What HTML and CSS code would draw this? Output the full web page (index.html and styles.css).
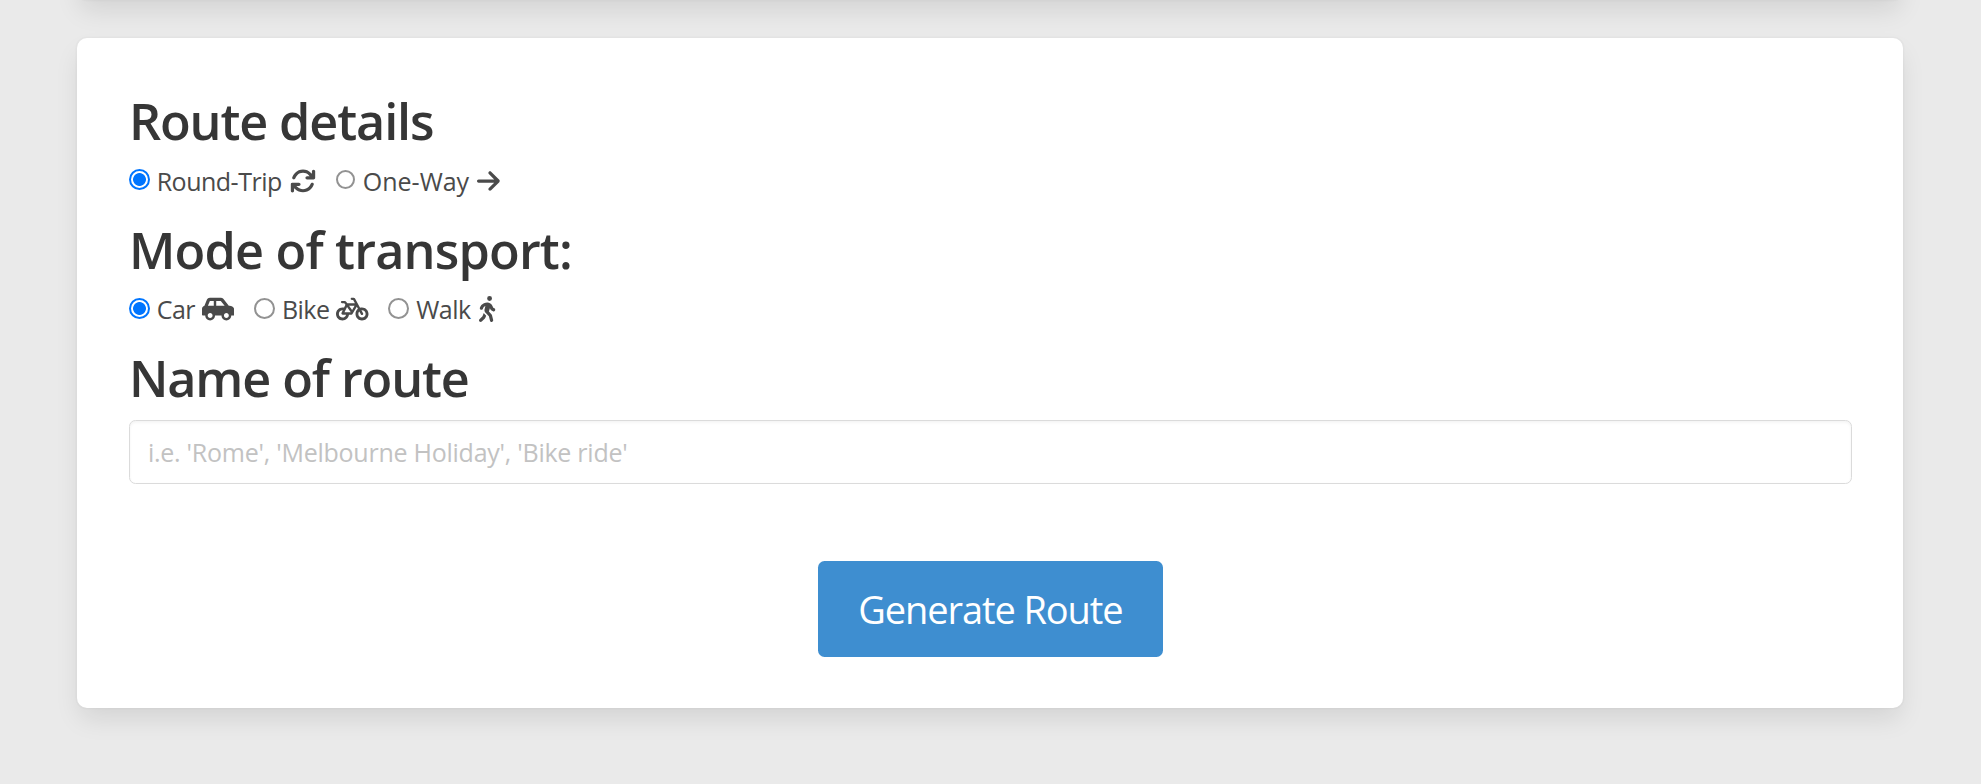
FILE: index.html
```
<!DOCTYPE html>
<html lang="en">
<head>
<meta charset="utf-8">
<title>Route planner</title>
<link rel="stylesheet" href="styles.css">
</head>
<body>
<div class="box box-previous"></div>
<form class="box">
  <h2 class="title title-details">Route details</h2>
  <div class="options">
    <label class="option"><input class="radio" type="radio" name="trip" checked><span class="text text-round">Round-Trip</span><svg class="icon" viewBox="0 0 512 512" width="26" height="26"><path d="M105.1 202.6c7.7-21.8 20.2-42.3 37.8-59.8c62.5-62.5 163.8-62.5 226.3 0L386.3 160H336c-17.7 0-32 14.3-32 32s14.3 32 32 32H463.5h.4c17.7 0 32-14.3 32-32V64c0-17.7-14.3-32-32-32s-32 14.3-32 32v51.2L414.4 97.6c-87.5-87.5-229.3-87.5-316.8 0C73.2 122 55.6 150.7 44.8 181.4c-5.9 16.7 2.9 34.9 19.5 40.8s34.9-2.9 40.8-19.5zM39 289.3c-5 1.5-9.8 4.2-13.7 8.2c-4 4-6.7 8.8-8.1 14c-.3 1.2-.6 2.5-.8 3.8c-.3 1.7-.4 3.4-.4 5.1V448c0 17.7 14.3 32 32 32s32-14.3 32-32V396.9l17.6 17.5c87.5 87.4 229.3 87.4 316.7 0c24.4-24.4 42.1-53.1 52.9-83.7c5.9-16.7-2.9-34.9-19.5-40.8s-34.9 2.9-40.8 19.5c-7.7 21.8-20.2 42.3-37.8 59.8c-62.5 62.5-163.8 62.5-226.3 0l-.1-.1L125.6 352H176c17.7 0 32-14.3 32-32s-14.3-32-32-32H48.4c-1.6 0-3.2 .1-4.8 .3s-3.1 .5-4.6 1z"/></svg></label>
    <label class="option"><input class="radio radio-small" type="radio" name="trip"><span class="text text-oneway">One-Way</span><svg class="icon" viewBox="0 0 448 512" width="22.75" height="26"><path d="M438.6 278.6c12.5-12.5 12.5-32.8 0-45.3l-160-160c-12.5-12.5-32.8-12.5-45.3 0s-12.5 32.8 0 45.3L338.8 224 32 224c-17.7 0-32 14.3-32 32s14.3 32 32 32l306.7 0L233.4 393.4c-12.5 12.5-12.5 32.8 0 45.3s32.8 12.5 45.3 0l160-160z"/></svg></label>
  </div>
  <h2 class="title title-mode">Mode of transport:</h2>
  <div class="options">
    <label class="option"><input class="radio" type="radio" name="mode" checked><span class="text text-car">Car</span><svg class="icon" viewBox="0 0 640 512" width="32.5" height="26"><path d="M544 192h-16L419.22 56.02A64.025 64.025 0 0 0 369.24 32H155.33c-26.17 0-49.7 15.93-59.42 40.23L48 194.26C20.44 201.4 0 226.21 0 256v112c0 8.84 7.16 16 16 16h48c0 53.02 42.98 96 96 96s96-42.98 96-96h128c0 53.02 42.98 96 96 96s96-42.98 96-96h48c8.84 0 16-7.16 16-16v-80c0-53.02-42.98-96-96-96zM160 432c-26.47 0-48-21.53-48-48s21.53-48 48-48 48 21.53 48 48-21.53 48-48 48zm72-240H116.93l38.4-96H232v96zm48 0V96h89.24l76.8 96H280zm200 240c-26.47 0-48-21.53-48-48s21.53-48 48-48 48 21.53 48 48-21.53 48-48 48z"/></svg></label>
    <label class="option"><input class="radio" type="radio" name="mode"><span class="text text-bike">Bike</span><svg class="icon" viewBox="0 0 640 512" width="32.5" height="26"><path d="M312 32c-13.3 0-24 10.7-24 24s10.7 24 24 24h25.7l34.6 64H222.9l-27.4-38C191 99.7 183.7 96 176 96H120c-13.3 0-24 10.7-24 24s10.7 24 24 24h43.7l22.1 30.7-26.6 53.1c-10-2.5-20.5-3.8-31.2-3.8C57.3 224 0 281.3 0 352s57.3 128 128 128c65.3 0 119.1-48.9 127-112h49c8.5 0 16.3-4.5 20.7-11.8l84.8-143.5 21.7 40.1C402.4 276.3 384 312 384 352c0 70.7 57.3 128 128 128s128-57.3 128-128s-57.3-128-128-128c-13.5 0-26.5 2.1-38.7 6L375.4 48.8C369.8 38.4 359 32 347.2 32H312zM458.6 303.7l32.3 59.7c6.3 11.7 20.9 16 32.5 9.7s16-20.9 9.7-32.5l-32.3-59.7c3.6-.6 7.4-.9 11.2-.9c39.8 0 72 32.2 72 72s-32.2 72-72 72s-72-32.2-72-72c0-18.6 7-35.5 18.6-48.3zM133.2 368h65c-7.3 32.1-36 56-70.2 56c-39.8 0-72-32.2-72-72s32.2-72 72-72c1.7 0 3.4 .1 5.1 .2l-24.2 48.5c-9 18.1 4.1 39.4 24.3 39.4zm33.7-48l50.7-101.3 72.9 101.2-.1 .1H166.8zm90.6-128H365.9L317 274.8 257.4 192z"/></svg></label>
    <label class="option"><input class="radio" type="radio" name="mode"><span class="text text-walk">Walk</span><svg class="icon" viewBox="0 0 320 512" width="16.25" height="26"><path d="M160 48a48 48 0 1 1 96 0 48 48 0 1 1 -96 0zM126.5 199.3c-1 .4-1.9 .8-2.9 1.2l-8 3.5c-16.4 7.3-29 21.2-34.7 38.2l-2.6 7.8c-5.6 16.8-23.7 25.8-40.5 20.2s-25.8-23.7-20.2-40.5l2.6-7.8c11.4-34.1 36.6-61.9 69.4-76.5l8-3.5c20.8-9.2 43.3-14 66.1-14c44.6 0 84.8 26.8 101.9 67.9L281 232.7l21.4 10.7c15.8 7.9 22.2 27.1 14.3 42.9s-27.1 22.2-42.9 14.3L247 287.3c-10.3-5.2-18.4-13.8-22.8-24.5l-9.6-23-19.3 65.5 49.5 54c5.4 5.9 9.2 13 11.2 20.8l23 92.1c4.3 17.1-6.1 34.5-23.3 38.8s-34.5-6.1-38.8-23.3l-22-88.1-70.7-77.1c-14.8-16.1-20.3-38.6-14.7-59.7l16.9-63.5zM68.7 398l25-62.4c2.1 3 4.5 5.8 7 8.6l40.7 44.4-14.5 36.2c-2.4 6-6 11.5-10.6 16.1L54.6 502.6c-12.5 12.5-32.8 12.5-45.3 0s-12.5-32.8 0-45.3L68.7 398z"/></svg></label>
  </div>
  <h2 class="title title-name">Name of route</h2>
  <input class="input" type="text" placeholder="i.e. 'Rome', 'Melbourne Holiday', 'Bike ride'">
  <button class="button" type="button">Generate Route</button>
</form>
</body>
</html>
```
FILE: styles.css
```
* {
  box-sizing: border-box;
}

body {
  margin: 0;
  height: 784px;
  overflow: hidden;
  background: #eaeaea;
  color: #4a4a4a;
  font-family: "Open Sans", "Noto Sans", sans-serif;
  font-size: 25px;
}

.box {
  display: flex;
  flex-direction: column;
  width: 1826px;
  height: 670px;
  margin: 38px 0 0 77.4px;
  padding: 54px 51.5px 0;
  border-radius: 10px;
  background: #fff;
  box-shadow: 0 13px 26px -3px rgba(10, 10, 10, 0.1), 0 0 0 1.6px rgba(10, 10, 10, 0.02);
}

.box-previous {
  height: 40px;
  margin-top: -40px;
  padding: 0;
}

.title {
  margin: 0;
  color: #363636;
  font-size: 50.4px;
  font-weight: 600;
  line-height: 58px;
  white-space: nowrap;
}

.title-details {
  letter-spacing: -1.13px;
}

.title-mode {
  letter-spacing: -0.82px;
}

.title-name {
  letter-spacing: -1.12px;
}

.options {
  display: flex;
  gap: 19.6px;
  height: 38.5px;
  margin: 11.5px 0 20.7px;
}

.option {
  display: flex;
  align-items: center;
  line-height: 38.5px;
}

.radio {
  width: 21px;
  height: 21px;
  margin: 0 6.8px 2px 0;
  border: 2px solid #929292;
  border-radius: 50%;
  background: #fff;
  appearance: none;
}

.radio:checked {
  border: 2px solid #0075ff;
  background: radial-gradient(circle, #0075ff 6px, #fff 6.8px);
}

.radio-small {
  width: 19px;
  height: 19px;
  margin-right: 8px;
}

.text {
  letter-spacing: -0.5px;
  white-space: nowrap;
}

.text-round {
  width: 133.5px;
}

.text-oneway {
  width: 114.3px;
  letter-spacing: 0;
}

.text-car {
  width: 45.3px;
}

.text-bike {
  width: 54.5px;
}

.text-walk {
  width: 63.2px;
}

.icon {
  fill: #4a4a4a;
}

.input {
  height: 64px;
  margin-top: 12.3px;
  padding: 0 18px;
  border: 1.5px solid #dbdbdb;
  border-radius: 6.5px;
  background: #fff;
  box-shadow: inset 0 1.6px 3px rgba(10, 10, 10, 0.05);
  font: inherit;
  letter-spacing: -0.25px;
}

.input::placeholder {
  color: #c2c2c2;
  opacity: 1;
}

.button {
  align-self: center;
  width: 345px;
  height: 96.5px;
  margin-top: 77.2px;
  padding: 0 0 1px;
  border: 0;
  border-radius: 6.5px;
  background: #3e8ed0;
  color: #fff;
  font: inherit;
  font-size: 38px;
  letter-spacing: -1.1px;
  white-space: nowrap;
}
```
